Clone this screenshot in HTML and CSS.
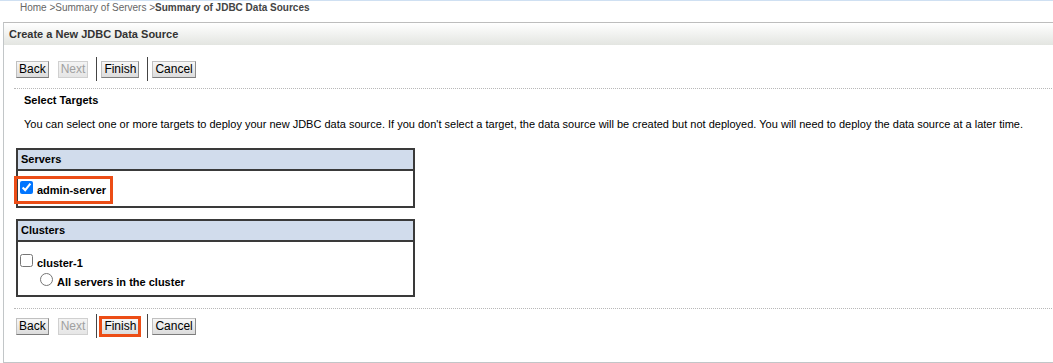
FILE: index.html
```html
<!DOCTYPE html>
<html lang="en">
<head>
    <meta charset="UTF-8">
    <title>Create a New JDBC Data Source</title>
    <link rel="stylesheet" href="styles.css">
</head>
<body>
    <div class="crumbs">Home &gt;Summary of Servers &gt;<strong>Summary of JDBC Data Sources</strong></div>

    <div class="panel">
        <div class="panel-head">Create a New JDBC Data Source</div>
        <div class="panel-body">
            <div class="btnbar">
                <button type="button">Back</button>
                <button type="button" class="next" disabled>Next</button>
                <span class="sep"></span>
                <button type="button">Finish</button>
                <span class="sep"></span>
                <button type="button">Cancel</button>
            </div>
            <div class="dots"></div>

            <div class="section-title">Select Targets</div>
            <p class="intro">You can select one or more targets to deploy your new JDBC data source. If you don't select a target, the data source will be created but not deployed. You will need to deploy the data source at a later time.</p>

            <div class="target-table servers">
                <div class="target-head">Servers</div>
                <div class="target-body">
                    <label class="target marked">
                        <input type="checkbox" checked>
                        <span>admin-server</span>
                    </label>
                </div>
            </div>

            <div class="target-table clusters">
                <div class="target-head">Clusters</div>
                <div class="target-body">
                    <label class="target cluster">
                        <input type="checkbox">
                        <span>cluster-1</span>
                    </label>
                    <label class="target member">
                        <input type="radio" name="cluster1">
                        <span>All servers in the cluster</span>
                    </label>
                </div>
            </div>

            <div class="dots bottom"></div>
            <div class="btnbar">
                <button type="button">Back</button>
                <button type="button" class="next" disabled>Next</button>
                <span class="sep"></span>
                <button type="button" class="marked-btn">Finish</button>
                <span class="sep"></span>
                <button type="button">Cancel</button>
            </div>
        </div>
    </div>
</body>
</html>
```

FILE: styles.css
```css
body {
    margin: 0;
    border-top: 1px solid #cfe0f2;
    font-family: "Liberation Sans", Arial, sans-serif;
    font-size: 11px;
    color: #000;
    background: #fff;
    overflow: hidden;
}
.crumbs {
    height: 21px;
    line-height: 14px;
    padding-left: 20px;
    font-size: 10px;
    color: #666;
}
.crumbs strong {
    color: #444;
}
.panel {
    margin-left: 3px;
    margin-right: -20px;
    border: 1px solid #c2c6c8;
    border-top-color: #bdbdbd;
}
.panel-head {
    height: 22px;
    line-height: 22px;
    padding-left: 5px;
    font-weight: bold;
    color: #333;
    background: linear-gradient(#ffffff, #e3e5e1);
}
.panel-body {
    padding: 12px 0 24px 10px;
}
.btnbar {
    display: flex;
    align-items: center;
    height: 24px;
    padding-left: 2px;
}
button {
    height: 17px;
    padding: 0 2px;
    margin: 0 9px 0 0;
    font-family: "Liberation Sans", Arial, sans-serif;
    font-size: 12px;
    line-height: 14px;
    color: #000;
    background: linear-gradient(#f7f7f7, #dcdcdc);
    border: 1px solid;
    border-color: #c0c0c0 #8c8c8c #7c7c7c #c0c0c0;
    border-radius: 0;
}
button.next {
    color: #a0a0a0;
    background: linear-gradient(#f4f4f4, #e6e6e6);
    border-color: #d0d0d0;
}
.sep {
    width: 1px;
    height: 24px;
    background: #444;
    margin: 0 4px 0 -1px;
}
.marked-btn {
    outline: 3px solid #ec4d16;
    outline-offset: -1px;
}
.dots {
    margin-top: 7px;
    border-top: 1px dotted #b8b8b8;
}
.dots.bottom {
    margin-top: 11px;
    margin-bottom: 5px;
}
.section-title {
    margin: 4px 0 0 10px;
    line-height: 14px;
    font-weight: bold;
}
.intro {
    margin: 10px 0 0 10px;
    line-height: 14px;
}
.target-table {
    box-sizing: border-box;
    width: 399px;
    margin: 17px 0 0 2px;
    border: 2px solid #3a3a3a;
}
.target-table.clusters {
    margin-top: 11px;
}
.target-head {
    height: 19px;
    line-height: 19px;
    padding-left: 3px;
    font-weight: bold;
    background: #d1dcec;
    border-bottom: 2px solid #3a3a3a;
}
.target-body {
    height: 35px;
}
.clusters .target-body {
    height: 53px;
}
.target {
    display: flex;
    align-items: flex-start;
    font-weight: bold;
    line-height: 14px;
}
.target input {
    width: 13px;
    height: 13px;
    margin: 0;
}
.marked {
    display: inline-flex;
    margin: 9px 0 0 0;
    padding: 1px 3px 3px 2px;
    outline: 3px solid #ec4d16;
    outline-offset: 1px;
}
.marked span {
    margin: 2px 0 0 4px;
}
.cluster {
    padding: 12px 0 0 2px;
}
.cluster span {
    margin: 2px 0 0 4px;
}
.member {
    padding: 3px 0 0 22px;
}
.member span {
    margin: 2px 0 0 4px;
}
```
